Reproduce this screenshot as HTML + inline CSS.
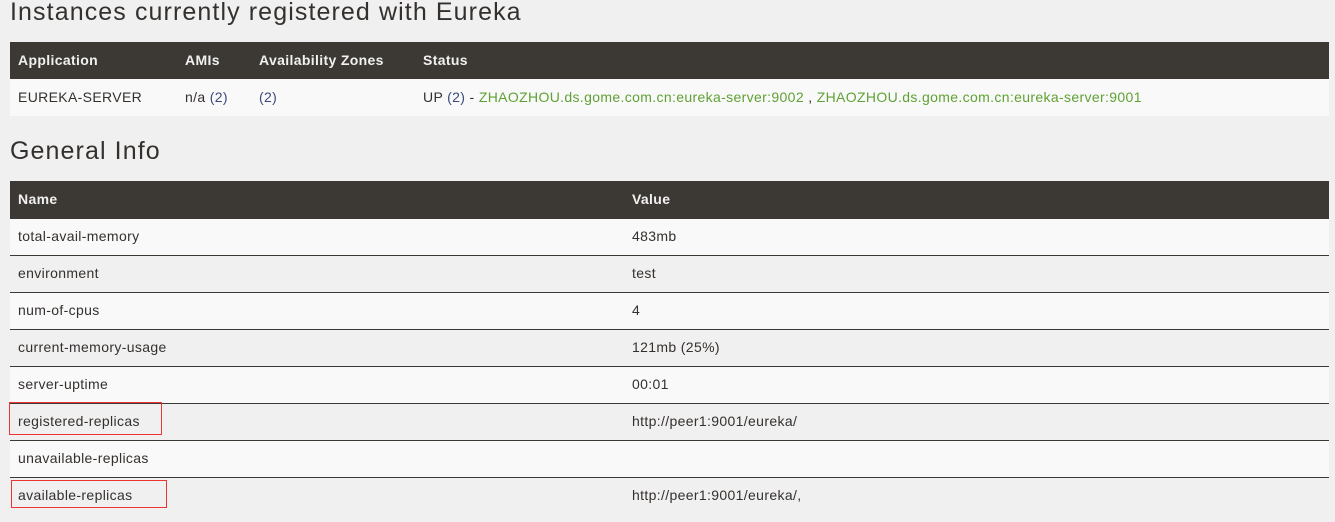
<!DOCTYPE html>
<html><head><meta charset="utf-8"><style>
body{margin:0;background:#f0f0f0;font-family:"Liberation Sans",sans-serif;color:#34302d;width:1335px;height:522px;overflow:hidden;position:relative}
h1{position:absolute;left:10px;margin:0;font-weight:normal;font-size:25px;color:#34302d;letter-spacing:1.1px}
table{position:absolute;left:10px;width:1319px;border-collapse:collapse;font-size:14px;letter-spacing:0.35px}
th{background:#3c3834;color:#f1f1f1;text-align:left;font-weight:bold;height:35px;padding:0 0 2px 8px}
td{height:34px;padding:0 0 2px 8px;border-top:1px solid #3c3834}
tr.o td{background:#f9f9f9}
tr.e td{background:#f0f0f0}
#t1 td{border-top:none;height:35px;background:#f9f9f9}
.n{color:#3b4a7a;font-weight:normal}
a{color:#5fa134;text-decoration:none}
.box{position:absolute;border:1px solid #e33;box-sizing:border-box}
</style></head><body>
<h1 style="top:-2px">Instances currently registered with Eureka</h1>
<table id="t1" style="top:42px">
<tr><th style="width:159px">Application</th><th style="width:66px">AMIs</th><th style="width:156px">Availability Zones</th><th>Status</th></tr>
<tr><td>EUREKA-SERVER</td><td>n/a <span class="n">(2)</span></td><td><span class="n">(2)</span></td><td>UP <span class="n">(2)</span> - <a>ZHAOZHOU.ds.gome.com.cn:eureka-server:9002</a> , <a>ZHAOZHOU.ds.gome.com.cn:eureka-server:9001</a></td></tr>
</table>
<h1 style="top:137px">General Info</h1>
<table style="top:181px">
<tr><th style="width:606px">Name</th><th>Value</th></tr>
<tr class="o"><td>total-avail-memory</td><td>483mb</td></tr>
<tr class="e"><td>environment</td><td>test</td></tr>
<tr class="o"><td>num-of-cpus</td><td>4</td></tr>
<tr class="e"><td>current-memory-usage</td><td>121mb (25%)</td></tr>
<tr class="o"><td>server-uptime</td><td>00:01</td></tr>
<tr class="e"><td>registered-replicas</td><td>http://peer1:9001/eureka/</td></tr>
<tr class="o"><td>unavailable-replicas</td><td></td></tr>
<tr class="e"><td>available-replicas</td><td>http://peer1:9001/eureka/,</td></tr>
</table>
<div class="box" style="left:9px;top:402px;width:153px;height:33px"></div>
<div class="box" style="left:11px;top:480px;width:156px;height:28px"></div>
</body></html>
